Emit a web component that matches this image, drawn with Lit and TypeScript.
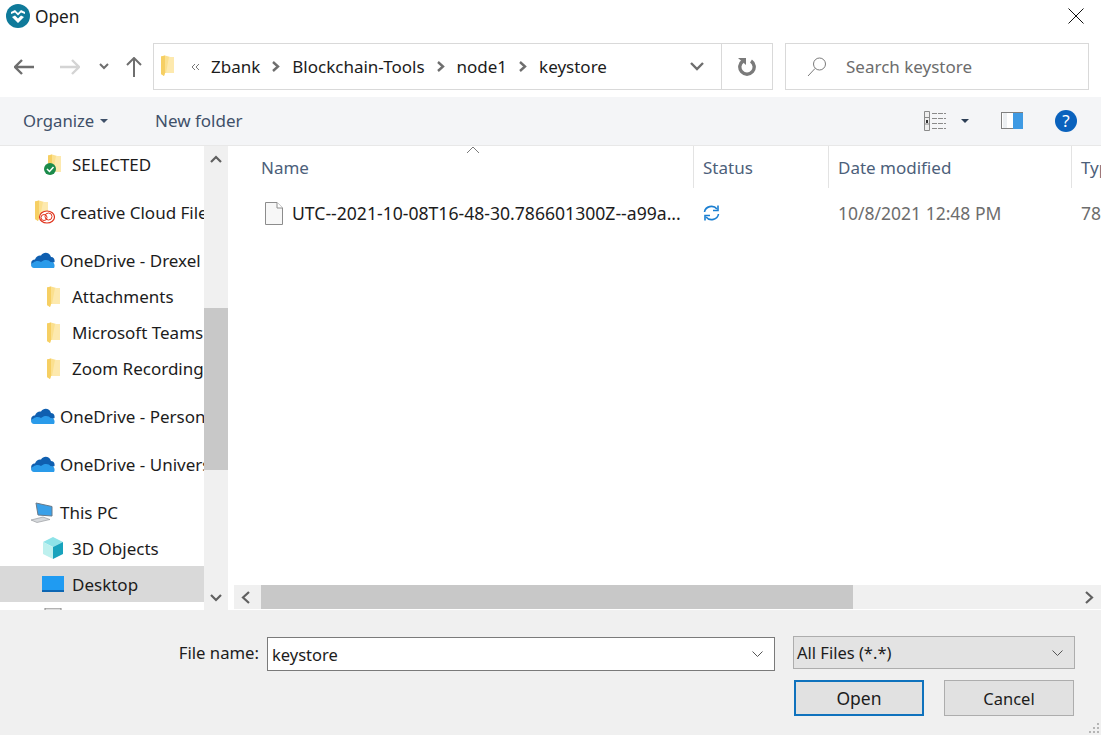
import {LitElement, html, svg, css} from 'lit';
import {customElement} from 'lit/decorators.js';

const folder = svg`<path d="M1 1.5 L5 0.5 L12 2.5 L14 2.5 V18 L5 18 L4 21 L1 19 Z" fill="#fbe08f"/><path d="M5 0.5 L5 18 L4 21 L1 19 V1.5 Z" fill="#f6cf63"/><path d="M9 2 H14 V18 H6 Z" fill="#fde9ae"/>`;
const cloud = svg`<path d="M2 16 C0 12 2 9.5 5 9.5 C6 6 9 5 11 5.5 C13.5 1.5 19.5 2 21 7 C24 7 25 10 24.5 12 L14 17 Z" fill="#0f5fb0"/><path d="M4 18 C0.5 18 0 13.5 3.5 12.5 C5.5 10.5 9 10.5 11 12 C14 9 19 9.5 20.5 12 C24 11.5 25.5 15 24 18 Z" fill="#2a9bea"/>`;

const icon = (w: number, h: number, body: unknown) =>
    html`<svg width=${w} height=${h} viewBox="0 0 ${w} ${h}">${body}</svg>`;

@customElement('app-root')
export class AppRoot extends LitElement {
    static styles = css`
        :host {
            display: block;
            width: 1101px;
            height: 735px;
            overflow: hidden;
            background: #fff;
            font-family: "Noto Sans", "Open Sans", sans-serif;
            font-size: 17px;
            color: #1c1c1c;
            position: relative;
        }
        svg { display: block; flex: none; }
        .title {
            height: 34px;
            box-sizing: border-box;
            display: flex;
            align-items: center;
            padding: 0 17px 2px 6px;
            gap: 5px;
        }
        .title .name { flex: 1; font-size: 17.3px; }
        .nav {
            height: 63px;
            display: flex;
            align-items: flex-start;
            padding-top: 9px;
            box-sizing: border-box;
        }
        .nav-buttons {
            width: 153px;
            height: 47px;
            display: flex;
            align-items: center;
            flex: none;
        }
        .address {
            width: 620px;
            height: 47px;
            box-sizing: border-box;
            border: 1px solid #d9d9d9;
            display: flex;
            align-items: center;
            flex: none;
        }
        .crumbs {
            flex: 1;
            display: flex;
            align-items: center;
            padding-left: 6px;
        }
        .crumbs .sep { margin: 0 12px; }
        .addr-drop {
            width: 49px;
            height: 100%;
            display: flex;
            align-items: center;
            justify-content: center;
        }
        .refresh {
            width: 50px;
            height: 100%;
            border-left: 1px solid #d9d9d9;
            display: flex;
            align-items: center;
            justify-content: center;
        }
        .search {
            width: 304px;
            height: 47px;
            margin-left: 12px;
            box-sizing: border-box;
            border: 1px solid #d9d9d9;
            display: flex;
            align-items: center;
            padding-left: 21px;
            gap: 19px;
            color: #6d6d6d;
        }
        .commands {
            height: 49px;
            background: #f4f5f7;
            border-bottom: 1px solid #e8e8e8;
            box-sizing: border-box;
            display: flex;
            align-items: center;
            padding: 0 24px 1px 23px;
            color: #3f5069;
        }
        .organize { display: flex; align-items: center; gap: 6px; width: 132px; font-size: 16.7px; }
        .spacer { flex: 1; }
        .views { display: flex; align-items: center; }
        .main { height: 464px; display: flex; }
        .tree {
            width: 204px;
            flex: none;
            overflow: hidden;
            display: flex;
            flex-direction: column;
        }
        .row {
            height: 36px;
            flex: none;
            display: flex;
            align-items: center;
            white-space: nowrap;
            overflow: hidden;
        }
        .row.group { margin-top: 12px; padding-left: 30px; gap: 6px; }
        .row.first { margin-top: 0; }
        .row.child { padding-left: 44px; gap: 10px; }
        .row.on { background: #d9d9d9; }
        .row.peek { align-items: flex-start; padding-top: 6px; box-sizing: border-box; }
        .row .ic { width: 18px; display: flex; justify-content: center; flex: none; position: relative; }
        .row.group .ic { width: 24px; }
        .vbar {
            width: 24px;
            flex: none;
            background: #f0f0f0;
            display: flex;
            flex-direction: column;
            align-items: center;
            justify-content: space-between;
            position: relative;
            padding: 9px 0 8px;
            box-sizing: border-box;
        }
        .vthumb {
            position: absolute;
            left: 0;
            top: 162px;
            width: 24px;
            height: 162px;
            background: #c8c8c8;
        }
        .files {
            flex: 1;
            margin-left: 6px;
            min-width: 0;
            display: flex;
            flex-direction: column;
            overflow: hidden;
            position: relative;
        }
        .head {
            height: 42px;
            display: flex;
            color: #4c607a;
        }
        .col {
            flex: none;
            box-sizing: border-box;
            padding-left: 9px;
            display: flex;
            align-items: center;
            white-space: nowrap;
            overflow: hidden;
        }
        .head .col { border-right: 1px solid #e3e3e3; }
        .head .col:last-child { border-right: 0; }
        .c1 { width: 460px; padding-left: 27px; }
        .c2 { width: 135px; }
        .c3 { width: 243px; }
        .c4 { width: 40px; }
        .caret { position: absolute; left: 232px; top: 0; }
        .file { height: 50px; display: flex; font-size: 17.6px; }
        .file .c1 { padding-left: 31px; gap: 9px; }
        .file .c2 { padding-left: 9px; }
        .file .c3, .file .c4 { color: #6d6d6d; font-size: 17.5px; }
        .rows { flex: 1; }
        .hbar {
            height: 24px;
            background: #f0f0f0;
            display: flex;
            align-items: center;
            justify-content: space-between;
            padding: 0 7px;
            position: relative;
            flex: none;
            margin-bottom: 1px;
        }
        .hthumb {
            position: absolute;
            left: 27px;
            top: 0;
            width: 592px;
            height: 24px;
            background: #c8c8c8;
        }
        .footer {
            height: 125px;
            background: #f0f0f0;
            box-sizing: border-box;
            padding: 26px 26px 0 0;
            display: flex;
            flex-direction: column;
            align-items: flex-end;
            position: relative;
        }
        .fields { display: flex; align-items: flex-start; }
        .fname { margin-right: 8px; line-height: 34px; font-size: 16.7px; }
        .input {
            width: 508px;
            height: 34px;
            margin-top: 1px;
            box-sizing: border-box;
            background: #fff;
            border: 1px solid #7a7a7a;
            display: flex;
            align-items: center;
            justify-content: space-between;
            padding: 0 11px 0 4px;
            font-size: 16.5px;
        }
        .select {
            width: 282px;
            height: 33px;
            margin-left: 18px;
            box-sizing: border-box;
            background: #e3e3e3;
            border: 1px solid #adadad;
            display: flex;
            align-items: center;
            justify-content: space-between;
            padding: 0 11px 0 3px;
            font-size: 16.5px;
        }
        .buttons { display: flex; gap: 20px; margin: 9px 1px 0 0; }
        .btn {
            width: 130px;
            height: 36px;
            box-sizing: border-box;
            background: #e1e1e1;
            border: 1px solid #adadad;
            display: flex;
            align-items: center;
            justify-content: center;
            font-size: 16.5px;
        }
        .btn.primary { border: 2px solid #0f72bd; font-size: 17.5px; }
        .grip { position: absolute; right: 1px; bottom: 1px; }
    `;

    renderTreeRow(cls: string, ic: unknown, label: string) {
        return html`<div class="row ${cls}"><span class="ic">${ic}</span><span>${label}</span></div>`;
    }

    render() {
        const smallFolder = icon(15, 21, folder);
        const oneDrive = icon(25, 20, cloud);
        return html`
            <div class="title">
                ${icon(24, 24, svg`
                    <circle cx="12" cy="12" r="12" fill="#0f7a9a"/>
                    <path d="M5 8 L9 6 L12 9 L15 6 L19 8 L19 10 L15 8.5 L12 11.5 L9 8.5 L5 10 Z" fill="#fff"/>
                    <path d="M6 13 L9 11.5 L12 14.5 L15 11.5 L18 13 L12 19 Z" fill="#fff"/>`)}
                <span class="name">Open</span>
                ${icon(16, 16, svg`<path d="M.5 .5 L15.5 15.5 M15.5 .5 L.5 15.5" stroke="#111" stroke-width="1" fill="none"/>`)}
            </div>

            <div class="nav">
                <div class="nav-buttons">
                    <span style="margin-left:14px">${icon(20, 16, svg`<path d="M1 8 H20 M8 1 L1 8 L8 15" stroke="#6e6e6e" stroke-width="2.4" fill="none"/>`)}</span>
                    <span style="margin-left:26px">${icon(20, 16, svg`<path d="M0 8 H19 M12 1 L19 8 L12 15" stroke="#d4d4d4" stroke-width="2.4" fill="none"/>`)}</span>
                    <span style="margin-left:19px">${icon(10, 7, svg`<path d="M1 1 L5 5 L9 1" stroke="#6e6e6e" stroke-width="2" fill="none"/>`)}</span>
                    <span style="margin-left:17px">${icon(16, 20, svg`<path d="M8 20 V1 M1 8 L8 1 L15 8" stroke="#6e6e6e" stroke-width="2" fill="none"/>`)}</span>
                </div>
                <div class="address">
                    <div class="crumbs">
                        ${icon(15, 24, folder)}
                        <span style="margin:0 11px 0 16px">${icon(9, 8, svg`<path d="M4 1 L1 4 L4 7 M8 1 L5 4 L8 7" stroke="#777" stroke-width="1" fill="none"/>`)}</span>
                        <span>Zbank</span>
                        <span class="sep">${icon(8, 11, svg`<path d="M1 1 L6 5.5 L1 10" stroke="#6e6e6e" stroke-width="2.4" fill="none"/>`)}</span>
                        <span>Blockchain-Tools</span>
                        <span class="sep">${icon(8, 11, svg`<path d="M1 1 L6 5.5 L1 10" stroke="#6e6e6e" stroke-width="2.4" fill="none"/>`)}</span>
                        <span>node1</span>
                        <span class="sep">${icon(8, 11, svg`<path d="M1 1 L6 5.5 L1 10" stroke="#6e6e6e" stroke-width="2.4" fill="none"/>`)}</span>
                        <span>keystore</span>
                    </div>
                    <div class="addr-drop">${icon(14, 9, svg`<path d="M1 1 L7 7 L13 1" stroke="#6e6e6e" stroke-width="2.4" fill="none"/>`)}</div>
                    <div class="refresh">${icon(18, 19, svg`<path d="M5 4 A7.2 7.2 0 1 0 13 4" stroke="#7a7a7a" stroke-width="3.4" fill="none"/><path d="M0 1 H8 V8 Z" fill="#7a7a7a"/>`)}</div>
                </div>
                <div class="search">
                    ${icon(20, 20, svg`<circle cx="12.5" cy="7" r="6" stroke="#7a7a7a" fill="none"/><path d="M8 11.5 L1 19" stroke="#7a7a7a" fill="none"/>`)}
                    <span>Search keystore</span>
                </div>
            </div>

            <div class="commands">
                <div class="organize">
                    <span>Organize</span>
                    ${icon(8, 4, svg`<path d="M0 0 H8 L4 4 Z" fill="#3f5069"/>`)}
                </div>
                <span>New folder</span>
                <div class="spacer"></div>
                <div class="views">
                    ${icon(22, 20, svg`<path d="M.5.5 H5.5 V19.5 H.5 Z" fill="#eee" stroke="#8a8a8a"/><path d="M1 6.5 H5 M1 13 H5" stroke="#8a8a8a"/><rect x="2" y="9" width="2" height="3" fill="#333"/><path d="M8 2.5 H22 M8 7.5 H22 M8 12.5 H22 M8 17.5 H22" stroke="#8a8a8a" stroke-dasharray="5 1"/>`)}
                    <span style="margin-left:15px">${icon(8, 4, svg`<path d="M0 0 H8 L4 4 Z" fill="#2c3e55"/>`)}</span>
                    <span style="margin-left:32px">${icon(22, 17, svg`<rect x=".5" y=".5" width="21" height="16" fill="#fff" stroke="#808080"/><rect x="2" y="1" width="4" height="15" fill="#eceff2"/><rect x="12" y="1" width="10" height="16" fill="#3f9ae3"/>`)}</span>
                    <span style="margin-left:32px">
                        <svg width="22" height="22" viewBox="0 0 22 22">
                            <circle cx="11" cy="11" r="11" fill="#0a62bd"/>
                            <text x="11" y="17" text-anchor="middle" fill="#fff" font-size="17" font-family="Noto Sans">?</text>
                        </svg>
                    </span>
                </div>
            </div>

            <div class="main">
                <div class="tree">
                    <div class="row child first">
                        <span class="ic">
                            ${icon(18, 21, svg`<g transform="translate(3 0)">${folder}</g><circle cx="6" cy="15" r="6" fill="#1b8b4b"/><path d="M3 15 L5.5 17.5 L9.5 13" stroke="#fff" stroke-width="1.5" fill="none"/>`)}
                        </span>
                        <span>SELECTED</span>
                    </div>
                    <div class="row group" style="padding-left:32px;gap:5px">
                        <span class="ic" style="width:23px">
                            ${icon(23, 24, svg`<g transform="translate(2 0)">${folder}</g><ellipse cx="15" cy="17" rx="7.5" ry="6" fill="#fff" stroke="#e0341e" stroke-width="1.2"/><ellipse cx="12" cy="17.5" rx="3" ry="3" fill="none" stroke="#e0341e"/><ellipse cx="16.5" cy="16.5" rx="3.5" ry="3.5" fill="none" stroke="#e0341e"/>`)}
                        </span>
                        <span>Creative Cloud File</span>
                    </div>
                    ${this.renderTreeRow('group', oneDrive, 'OneDrive - Drexel')}
                    ${this.renderTreeRow('child', smallFolder, 'Attachments')}
                    ${this.renderTreeRow('child', smallFolder, 'Microsoft Teams')}
                    ${this.renderTreeRow('child', smallFolder, 'Zoom Recording')}
                    ${this.renderTreeRow('group', oneDrive, 'OneDrive - Person')}
                    ${this.renderTreeRow('group', oneDrive, 'OneDrive - Univers')}
                    ${this.renderTreeRow('group', icon(24, 21, svg`
                        <path d="M6 1 L22 4.5 V14 L8 13 Z" fill="#3aa0e8" stroke="#6b7a88" stroke-width="1"/>
                        <path d="M1 18 L13 15 L20 17.5 L7 20.5 Z" fill="#d6d9dc" stroke="#8b8f93" stroke-width=".6"/>`), 'This PC')}
                    ${this.renderTreeRow('child', icon(22, 22, svg`
                        <path d="M11 0 L21 5 L11 10 L1 5 Z" fill="#8ee3e8"/>
                        <path d="M1 5 L11 10 V22 L1 17 Z" fill="#bdf0ee"/>
                        <path d="M21 5 L11 10 V22 L21 17 Z" fill="#18a3bd"/>`), '3D Objects')}
                    ${this.renderTreeRow('child on', icon(22, 16, svg`<rect width="22" height="16" fill="#1f9bf2"/><rect y="14" width="22" height="2" fill="#0c66b3"/>`), 'Desktop')}
                    <div class="row child peek">
                        <span class="ic">${icon(18, 20, svg`<rect x="1" y="0" width="16" height="18" fill="#ddd" stroke="#8a8a8a"/>`)}</span>
                    </div>
                </div>
                <div class="vbar">
                    ${icon(12, 8, svg`<path d="M1 7 L6 2 L11 7" stroke="#606060" stroke-width="2.2" fill="none"/>`)}
                    <div class="vthumb"></div>
                    ${icon(12, 8, svg`<path d="M1 1 L6 6 L11 1" stroke="#606060" stroke-width="2.2" fill="none"/>`)}
                </div>
                <div class="files">
                    <div class="head">
                        <div class="col c1">Name</div>
                        <div class="col c2">Status</div>
                        <div class="col c3">Date modified</div>
                        <div class="col c4">Typ</div>
                    </div>
                    <span class="caret">${icon(14, 8, svg`<path d="M1 7 L7 1 L13 7" stroke="#7a7a7a" fill="none"/>`)}</span>
                    <div class="rows">
                        <div class="file">
                            <div class="col c1">
                                ${icon(18, 23, svg`<path d="M.5.5 H12 L17.5 6 V22.5 H.5 Z" fill="#f7f7f7" stroke="#8c8c8c"/><path d="M12 .5 V6 H17.5" fill="#fff" stroke="#8c8c8c"/>`)}
                                <span>UTC--2021-10-08T16-48-30.786601300Z--a99a...</span>
                            </div>
                            <div class="col c2">
                                ${icon(17, 16, svg`<path d="M1.5 7 A7 6.5 0 0 1 14 4 M15.5 9 A7 6.5 0 0 1 3 12" stroke="#1b7fd1" stroke-width="1.6" fill="none"/><path d="M15 0.5 V5.5 H10 M2 15.5 V10.5 H7" stroke="#1b7fd1" stroke-width="1.6" fill="none"/>`)}
                            </div>
                            <div class="col c3">10/8/2021 12:48 PM</div>
                            <div class="col c4">78</div>
                        </div>
                    </div>
                    <div class="hbar">
                        ${icon(10, 13, svg`<path d="M8 1 L2 6.5 L8 12" stroke="#606060" stroke-width="2.2" fill="none"/>`)}
                        <div class="hthumb"></div>
                        ${icon(10, 13, svg`<path d="M2 1 L8 6.5 L2 12" stroke="#606060" stroke-width="2.2" fill="none"/>`)}
                    </div>
                </div>
            </div>

            <div class="footer">
                <div class="fields">
                    <span class="fname">File name:</span>
                    <div class="input">
                        <span>keystore</span>
                        ${icon(11, 6, svg`<path d="M.5 .5 L5.5 5.5 L10.5 .5" stroke="#555" fill="none"/>`)}
                    </div>
                    <div class="select">
                        <span>All Files (*.*)</span>
                        ${icon(11, 6, svg`<path d="M.5 .5 L5.5 5.5 L10.5 .5" stroke="#555" fill="none"/>`)}
                    </div>
                </div>
                <div class="buttons">
                    <div class="btn primary">Open</div>
                    <div class="btn">Cancel</div>
                </div>
                <span class="grip">${icon(12, 12, svg`<path d="M9 1 H11 V3 H9 Z M5 5 H7 V7 H5 Z M9 5 H11 V7 H9 Z M1 9 H3 V11 H1 Z M5 9 H7 V11 H5 Z M9 9 H11 V11 H9 Z" fill="#b5b5b5"/>`)}</span>
            </div>
        `;
    }
}
